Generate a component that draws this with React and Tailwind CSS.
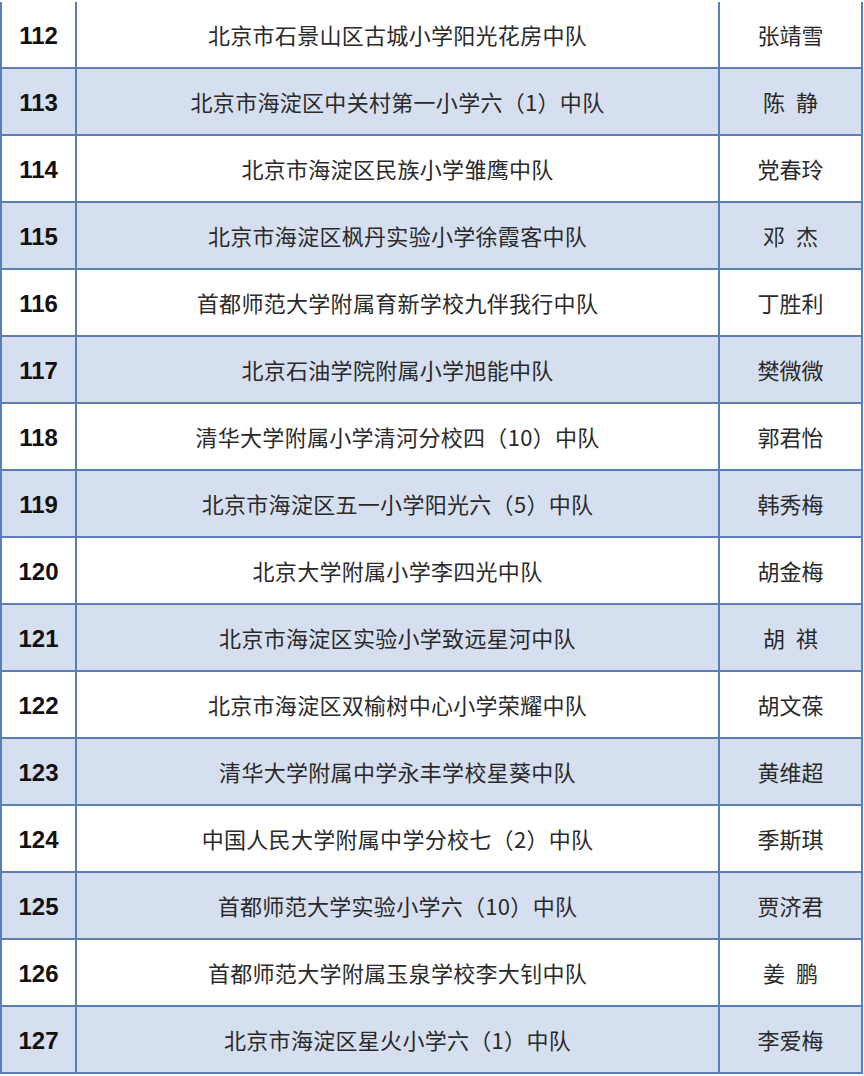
const rows = [
  ["112", "北京市石景山区古城小学阳光花房中队", "张靖雪"],
  ["113", "北京市海淀区中关村第一小学六（1）中队", "陈\u2002静"],
  ["114", "北京市海淀区民族小学雏鹰中队", "党春玲"],
  ["115", "北京市海淀区枫丹实验小学徐霞客中队", "邓\u2002杰"],
  ["116", "首都师范大学附属育新学校九伴我行中队", "丁胜利"],
  ["117", "北京石油学院附属小学旭能中队", "樊微微"],
  ["118", "清华大学附属小学清河分校四（10）中队", "郭君怡"],
  ["119", "北京市海淀区五一小学阳光六（5）中队", "韩秀梅"],
  ["120", "北京大学附属小学李四光中队", "胡金梅"],
  ["121", "北京市海淀区实验小学致远星河中队", "胡\u2002祺"],
  ["122", "北京市海淀区双榆树中心小学荣耀中队", "胡文葆"],
  ["123", "清华大学附属中学永丰学校星葵中队", "黄维超"],
  ["124", "中国人民大学附属中学分校七（2）中队", "季斯琪"],
  ["125", "首都师范大学实验小学六（10）中队", "贾济君"],
  ["126", "首都师范大学附属玉泉学校李大钊中队", "姜\u2002鹏"],
  ["127", "北京市海淀区星火小学六（1）中队", "李爱梅"],
];

export default function App() {
  return (
    <div className="w-[864px] h-[1076px] bg-white overflow-hidden pt-[2px]">
      <div className="w-[863px] border-x-2 border-[#5b7eb5] text-[#1c1c1c]">
        {rows.map(([no, team, name], i) => (
          <div
            key={no}
            className={`grid grid-cols-[73px_2px_641px_2px_1fr] h-[67px] border-b-2 border-[#5b7eb5] ${
              i % 2 === 1 ? "bg-[#d6dfef]" : "bg-white"
            }`}
          >
            <div className="flex items-center justify-center pt-[3px] font-['Liberation_Sans',sans-serif] font-bold text-[24px] text-[#111]">
              {no}
            </div>
            <div className="bg-[#5b7eb5]" />
            <div className="flex items-center justify-center font-['Noto_Sans_CJK_SC',sans-serif] text-[22px] tracking-[0.3px] text-[#2a2a2a]">
              {team}
            </div>
            <div className="bg-[#5b7eb5]" />
            <div className="flex items-center justify-center font-['Noto_Sans_CJK_SC',sans-serif] text-[22px] text-[#2a2a2a]">
              {name}
            </div>
          </div>
        ))}
      </div>
    </div>
  );
}
